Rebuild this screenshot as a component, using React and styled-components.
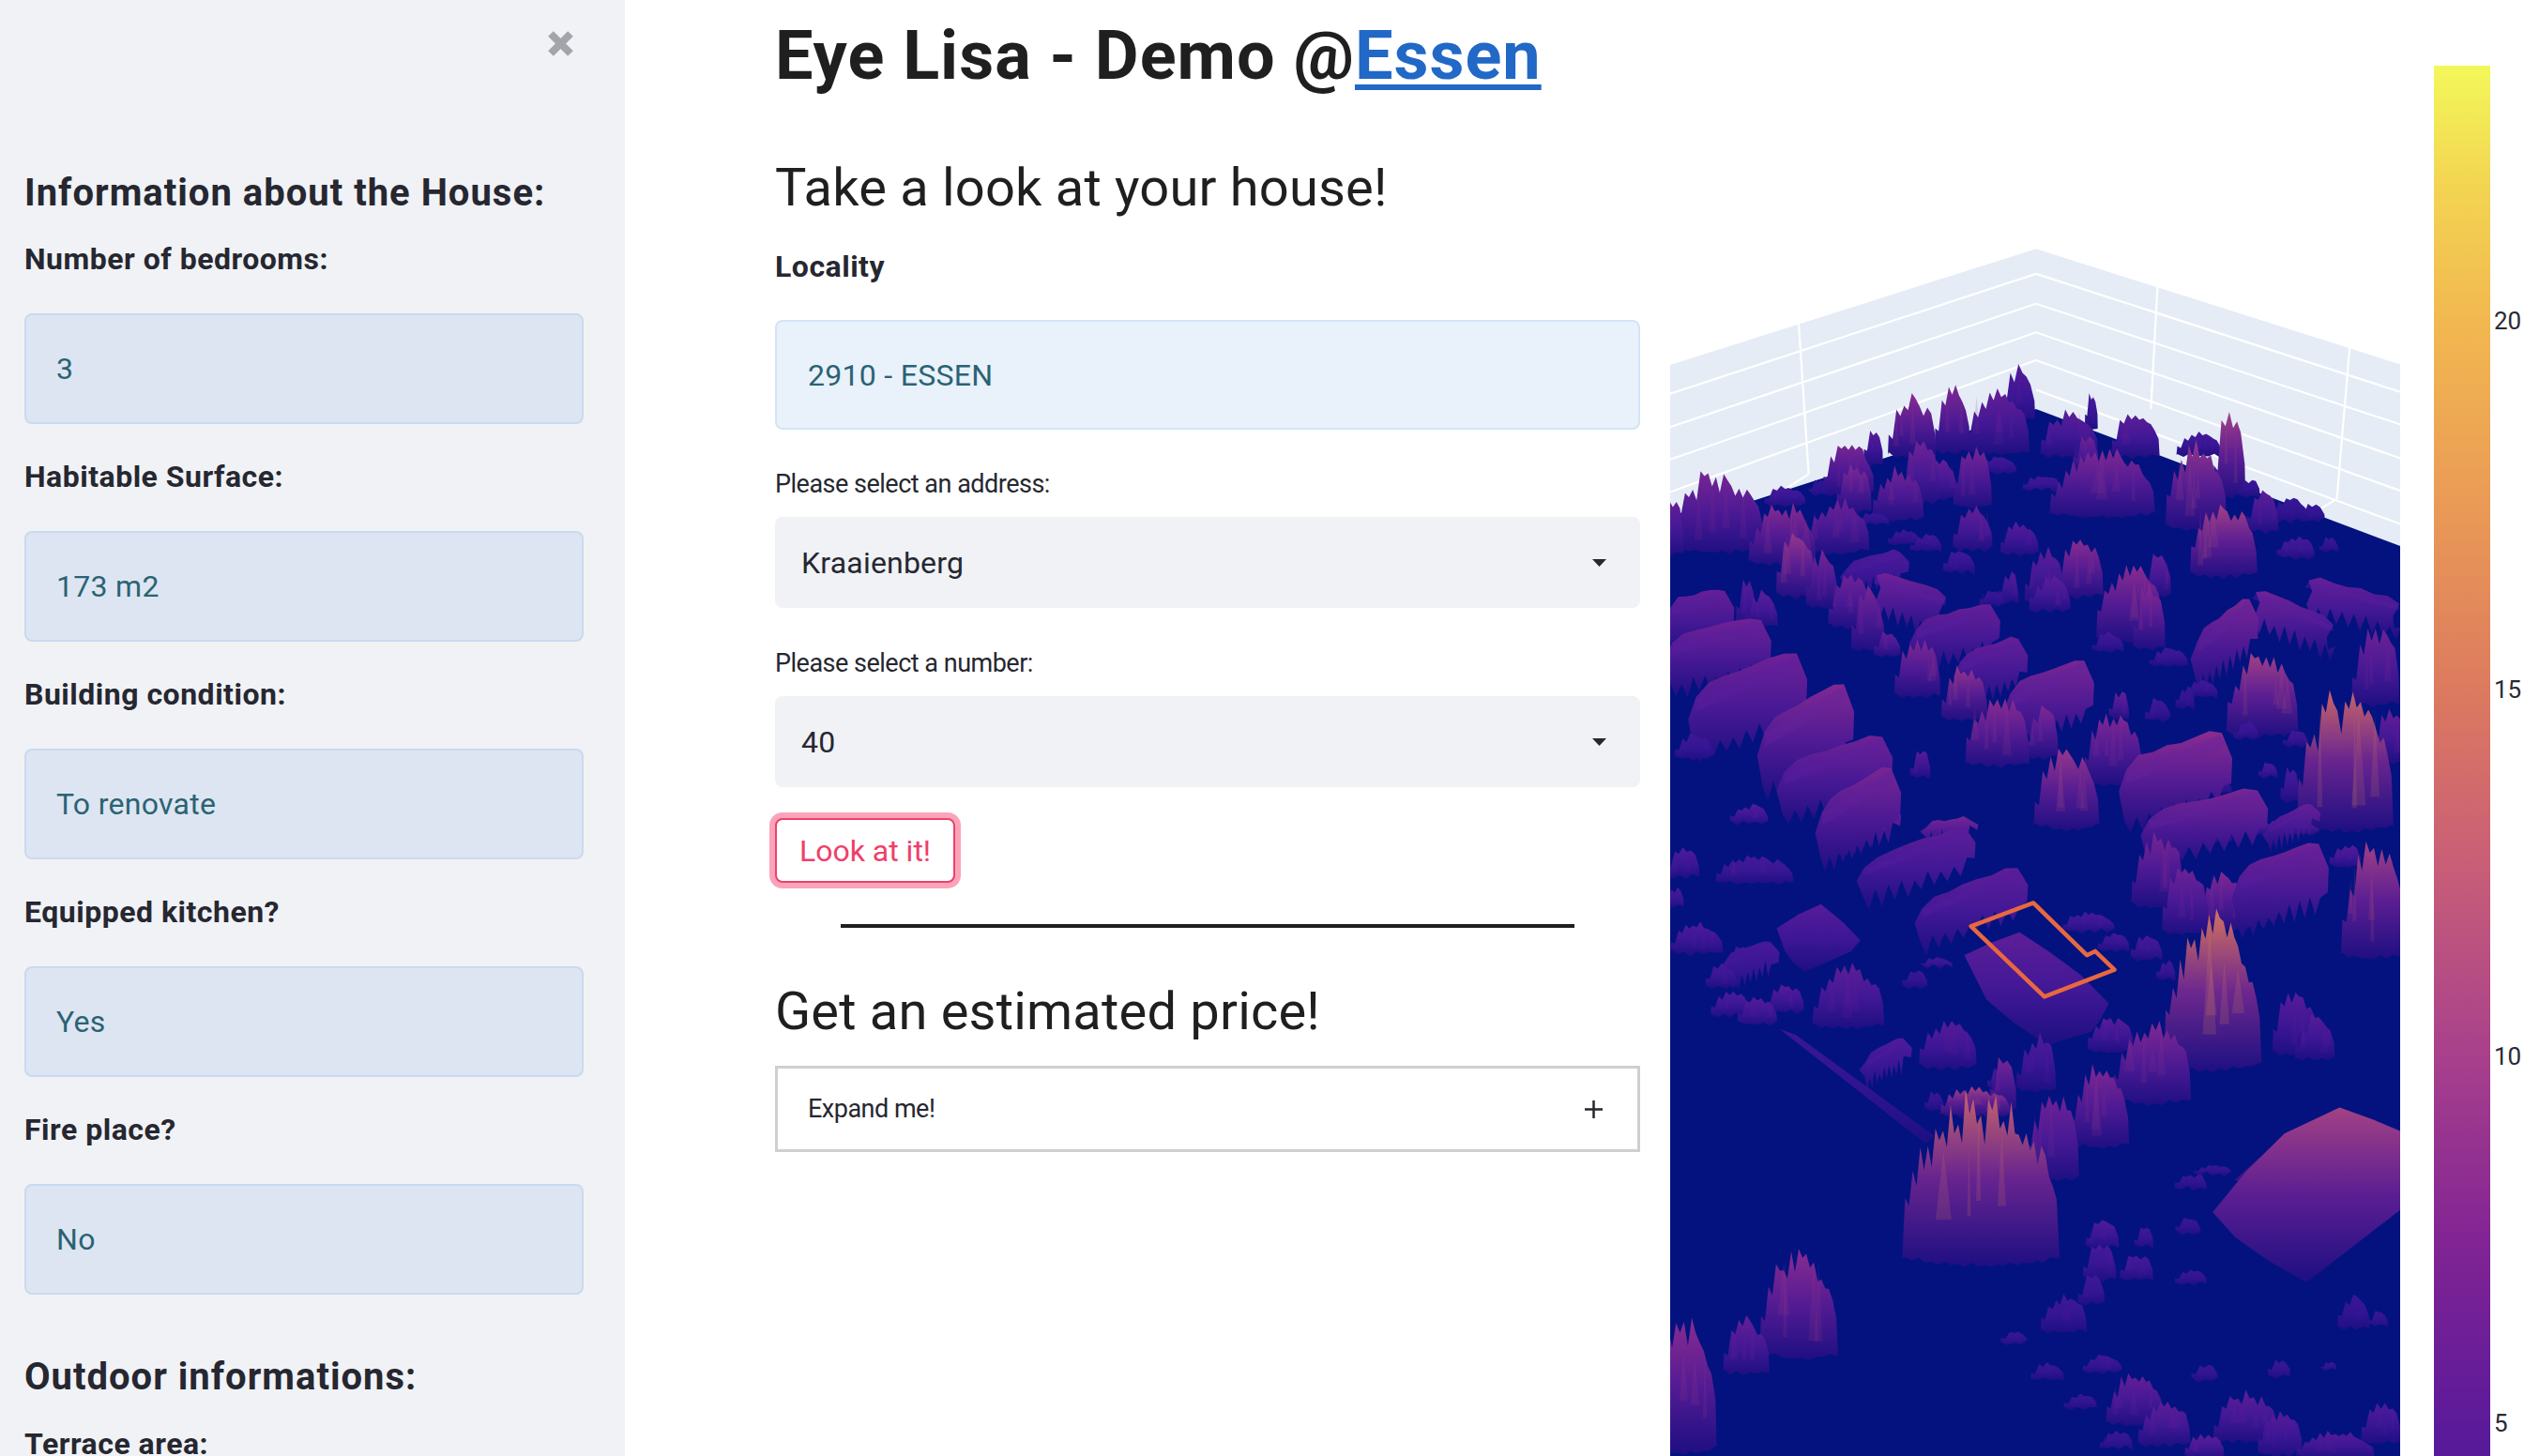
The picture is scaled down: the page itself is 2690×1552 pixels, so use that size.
import React from 'react';
import styled, { createGlobalStyle } from 'styled-components';

const Global = createGlobalStyle`
  html, body { margin: 0; padding: 0; height: 1552px; overflow: hidden; background: #fff; }
  #root { height: 1552px; }
  * { box-sizing: border-box; }
`;
const FONT = `Roboto, "Noto Sans", "Liberation Sans", sans-serif`;

const Page = styled.div`display:flex;height:1552px;overflow:hidden;font-family:${FONT};color:#262730;`;
const Sidebar = styled.aside`flex:0 0 666px;height:1552px;overflow:hidden;background:#f0f2f6;padding:33px 44px 0 26px;`;
const CloseRow = styled.div`display:flex;justify-content:flex-end;height:27px;padding-right:11px;margin-bottom:122px;`;
const SideHeading = styled.h3`margin:${p => p.$top || 0}px 0 0;font-size:40px;line-height:48px;font-weight:700;letter-spacing:1px;color:#262730;white-space:nowrap;`;
const FieldLabel = styled.div`margin-top:${p => p.$top}px;font-size:32px;line-height:40px;font-weight:700;letter-spacing:.5px;color:#262730;white-space:nowrap;`;
const ValueBox = styled.div`
  display:flex;align-items:center;height:${p => p.$h || 118}px;margin-top:${p => p.$top || 38}px;
  padding-left:${p => p.$pad || 32}px;border:2px solid ${p => p.$light ? '#d5e4f6' : '#c9daef'};border-radius:8px;
  background:${p => p.$light ? '#e9f1fb' : '#dee5f2'};color:#2a6373;font-size:32px;letter-spacing:.3px;
`;
const Main = styled.main`flex:0 0 922px;margin-left:160px;`;
const Title = styled.h1`margin:15px 0 0;font-size:72px;line-height:90px;font-weight:700;letter-spacing:1px;color:#1f1f1f;white-space:nowrap;`;
const TitleLink = styled.a`color:#2168c7;text-decoration:underline;text-decoration-thickness:6px;text-underline-offset:6px;`;
const SubTitle = styled.h2`margin:${p => p.$top}px 0 0;font-size:56px;line-height:70px;font-weight:400;letter-spacing:.2px;color:#1f1f1f;white-space:nowrap;`;
const SelectLabel = styled.div`margin-top:${p => p.$top}px;font-size:27px;line-height:36px;letter-spacing:-.5px;color:#262730;white-space:nowrap;`;
const Select = styled.div`
  display:flex;align-items:center;justify-content:space-between;height:97px;margin-top:17px;padding:0 36px 0 28px;
  background:#f0f2f6;border-radius:8px;font-size:32px;letter-spacing:.2px;color:#262730;
`;
const LookButton = styled.button`
  display:block;width:192px;height:69px;margin-top:33px;padding:0;background:#fff;border:2px solid #ea4269;border-radius:8px;
  box-shadow:0 0 0 6px rgba(246,51,102,.45);color:#ee4069;font-family:${FONT};font-size:32px;
`;
const Rule = styled.hr`height:4px;margin:44px 70px 0;border:0;background:#1f1f1f;`;
const Expander = styled.div`
  display:flex;align-items:center;justify-content:space-between;height:92px;margin-top:23px;padding:0 37px 0 32px;
  border:3px solid #cfcfd1;font-size:27px;letter-spacing:-.5px;color:#262730;
`;
const Chart = styled.svg`flex:0 0 910px;margin-left:32px;display:block;height:1552px;`;
const Tick = styled.text`font-family:${FONT};font-size:26px;fill:#2a2a33;`;

function rng(seed) {
  return () => {
    seed |= 0; seed = seed + 0x6D2B79F5 | 0;
    let t = Math.imul(seed ^ seed >>> 15, 1 | seed);
    t = t + Math.imul(t ^ t >>> 7, 61 | t) ^ t;
    return ((t ^ t >>> 14) >>> 0) / 4294967296;
  };
}
const A = (X, Y) => [1770 + X / 1.7, 240 + Y / 2.45];
const B = (X, Y) => [1770 + X / 1.7, 880 + Y / 2.33];

const toneStops = [[0, '#2a1490'], [.2, '#47199a'], [.4, '#661f96'], [.6, '#8a2c90'], [.75, '#b04c80'], [.9, '#d4735f'], [1, '#e88f58']];
const hex = c => [1, 3, 5].map(i => parseInt(c.slice(i, i + 2), 16));
const mix = (a, b, t) => { const x = hex(a), y = hex(b); return '#' + x.map((v, i) => Math.round(v + (y[i] - v) * t).toString(16).padStart(2, '0')).join(''); };
const toneColor = t => {
  for (let i = 1; i < toneStops.length; i++) if (t <= toneStops[i][0]) {
    const [a, ca] = toneStops[i - 1], [b, cb] = toneStops[i];
    return mix(ca, cb, (t - a) / (b - a));
  }
  return '#e88f58';
};
const snap = t => Math.round(t * 20) / 20;
const tones = Array.from({ length: 21 }, (_, i) => i / 20);

// [Xc, Ybase, W, Ytop, tone]
const towersA = [
  [455,600,75,435,.62],[528,590,55,398,.55],[610,590,100,420,.38],[648,505,52,352,.3],[740,600,90,475,.36],[860,600,75,478,.36],[780,530,20,425,.22],
  [340,700,80,555,.5],[350,745,55,605,.56],[385,620,30,522,.3],[430,765,80,625,.5],[470,720,60,550,.45],[565,730,60,560,.5],[505,710,55,600,.42],
  [800,755,165,575,.56],[770,640,40,535,.45],[1030,700,50,475,.72],[970,785,95,555,.66],[1020,910,105,710,.7],[1090,795,50,680,.36],[1065,705,35,660,.08],[975,600,70,535,.22],
  [100,845,150,630,.48],[22,855,34,700,.4],[220,880,105,715,.58],[245,965,62,785,.66],[292,995,50,845,.5],[225,730,65,678,.22],[320,850,100,705,.45],[285,700,30,660,.05],
  [565,845,62,725,.42],[650,855,60,770,.32],[760,965,72,795,.62],[695,985,62,830,.36],[630,985,32,895,.32],[705,1005,65,910,.36],[850,1080,105,870,.62],[885,1100,50,920,.6],[900,965,42,830,.42],
  [345,1045,72,905,.46],[375,1105,52,925,.52],[410,1125,42,1050,.42],[465,1225,72,1060,.56],[550,1285,72,1140,.66],[610,1405,100,1210,.6],[690,1385,52,1250,.55],
  [735,1568,102,1360,.66],[820,1455,92,1260,.56],[830,1285,32,1210,.42],[1090,1325,112,1100,.72],[1295,1245,75,1040,.46],[1240,1568,150,1190,.86],[1320,1400,50,1260,.4],
  [155,1045,32,905,.3],[182,1045,52,945,.35],[60,1390,60,1325,.15],[160,1560,60,1510,.3],[470,1440,32,1365,.3],
  [440,830,50,790,.12],[480,850,50,800,.14],[540,905,50,840,.16],[600,990,40,950,.12],[1150,865,60,805,.18],[1210,850,30,810,.1],[1140,770,60,710,.1],[1180,770,40,725,.08],
  [610,645,60,600,.14],[690,690,60,650,.16],[385,780,50,745,.1],[810,1110,50,1060,.14],[920,1150,60,1100,.15],[980,1230,50,1180,.14],[900,1290,40,1230,.14],[950,1260,30,1200,.1],[1060,1340,40,1290,.14],[1150,1360,40,1310,.14],
  [1000,1480,60,1440,.14],[1100,1440,30,1400,.2],[1140,1500,30,1410,.2],
];
const towersB = [
  [340,495,112,335,.36],[1000,592,152,200,.88],[890,682,122,470,.56],[795,792,92,585,.56],[710,872,82,640,.46],[580,1075,245,640,.86],[620,705,42,560,.52],[570,720,110,640,.72],
  [250,1312,122,1035,.62],[155,1355,72,1215,.42],[42,1545,102,1205,.6],[1150,562,72,400,.3],[1185,578,62,465,.3],[900,195,82,0,.52],[950,262,72,85,.46],[1022,255,82,100,.56],[1292,318,102,30,.68],
  [520,598,90,470,.3],[680,655,62,510,.26],[610,650,32,590,.22],[495,705,30,650,.12],[860,1485,92,1350,.42],[912,1535,82,1420,.36],[1060,1525,102,1400,.36],[1122,1560,70,1450,.32],[1222,1568,122,1500,.3],[1305,1530,62,1420,.25],[985,1568,62,1500,.36],
  [800,1045,52,975,.24],[795,1125,52,1030,.22],[862,1125,52,1060,.18],[780,1185,42,1110,.14],[730,1255,72,1160,.15],[985,1375,42,1330,.12],[800,1355,62,1310,.16],[640,1285,42,1250,.1],[700,1375,52,1330,.1],[760,1445,52,1410,.1],[825,1545,52,1500,.1],
  [170,140,122,70,.2],[40,125,52,50,.25],[65,315,82,235,.26],[25,200,30,150,.2],[125,470,60,400,.26],[175,490,62,420,.3],[225,460,60,390,.28],[110,400,50,340,.22],[150,350,50,290,.15],
  [815,560,72,465,.32],[775,260,82,210,.22],[820,310,50,260,.15],[880,330,50,265,.22],[915,380,30,330,.14],[500,350,50,325,.14],[460,400,40,355,.1],[1000,865,60,840,.1],[960,900,50,860,.08],[955,1010,40,970,.08],[875,1045,30,990,.16],[960,1135,50,1100,.1],[1255,1245,50,1160,.12],[1300,1240,30,1200,.1],[1210,1350,25,1330,.1],[1120,1365,35,1320,.12],
  [1130,20,110,-20,.4],[1240,100,50,40,.3],[1000,40,60,-30,.3],
];
// x0,y0,x1,y1,drop,tone
const housesA = [
  [17,985,118,950,110,.38],[17,1078,185,1025,135,.44],[60,1215,250,1110,170,.44],[185,1305,335,1190,180,.55],[220,1415,405,1330,135,.46],[290,1515,420,1410,160,.5],
  [388,905,520,968,95,.44],[460,1045,600,985,110,.4],[540,1130,650,1075,110,.42],[630,1210,770,1130,145,.52],[840,1405,1020,1318,165,.62],[970,1075,1068,970,130,.5],
  [1075,950,1222,1040,80,.46],[1170,920,1342,985,80,.42],[335,890,435,850,65,.24],[690,1200,760,1160,85,.3],
  [880,1540,1085,1470,120,.5],[1100,1568,1180,1510,55,.4],[300,1568,420,1510,70,.45],[480,1568,560,1550,35,.5],
];
const housesB = [
  [365,95,555,0,95,.36],[470,195,650,100,105,.36],[1045,112,1195,38,150,.46],[370,580,440,525,60,.24],[115,330,200,285,65,.18],
];
const polysB = [
  [[[210,255],[250,220],[290,195],[330,240],[362,285],[345,312],[300,340],[260,362],[240,340],[225,312]],.28],
  [[[550,322],[600,290],[650,265],[700,310],[760,370],[812,442],[795,485],[780,512],[700,545],[640,490],[590,432]],.34],
  [[[1000,960],[1060,860],[1130,765],[1230,700],[1290,730],[1342,760],[1342,952],[1250,1050],[1170,1135],[1100,1080],[1040,1022]],.68],
  [[[1040,880],[1130,770],[1230,705],[1335,790],[1250,830],[1150,925]],.6],
  [[[610,300],[650,268],[745,365],[770,385],[700,405],[650,350]],.42],
  [[[215,505],[245,520],[495,770],[480,790]],.12],
];
const outline = [[675,192],[562,250],[695,425],[822,358],[787,312],[772,322]].map(([x, y]) => B(x, y).join(',')).join(' ');

function buildTerrain() {
  const r = rng(77);
  const out = [];
  const tower = (conv, [xc, yb, w0, yt, tone]) => {
    const w = w0 * 1.12;
    const [, base] = conv(xc, yb);
    const [xl] = conv(xc - w / 2, yb);
    const [xr] = conv(xc + w / 2, yb);
    const [, top] = conv(xc, yt);
    const H = base - top, W = xr - xl;
    const n = Math.max(3, Math.round(W / 8));
    const pts = [[xl - W * .02, base]];
    for (let i = 0; i <= n; i++) {
      const t = i / n;
      const env = .08 + .92 * Math.pow(Math.sin(Math.PI * (t * .94 + .03)), .5);
      const peak = env * (.8 + .2 * r());
      pts.push([xl + W * t, base - H * peak]);
      if (i < n) pts.push([xl + W * (t + .5 / n), base - H * peak * (.78 + .16 * r())]);
    }
    pts.push([xr + W * .02, base]);
    const m = Math.max(3, Math.round(W / 7));
    for (let i = m; i >= 0; i--) {
      const x = xl + W * i / m;
      pts.push([x, base + (i % 2 ? 3 : -3) * r() + Math.sin(i / m * Math.PI) * H * .04]);
    }
    const streaks = [];
    const sn = Math.min(4, Math.round(W / 16));
    for (let i = 0; i < sn; i++) {
      const sx = xl + W * (.12 + .76 * r());
      const sw = 2 + W * .06 * r();
      const st = base - H * (.6 + .3 * r());
      const sb = base - H * (.1 + .25 * r());
      streaks.push(`${sx - sw},${sb} ${sx},${st} ${sx + sw},${sb}`);
    }
    out.push({ y: base, pts: pts.map(p => p.map(v => v.toFixed(1)).join(',')).join(' '), tone: snap(tone), streaks });
  };
  const house = (conv, [x0, y0, x1, y1, drop, tone]) => {
    const [ax, ay] = conv(x0, y0), [bx, by] = conv(x1, y1);
    const d = conv(0, drop)[1] - conv(0, 0)[1];
    const sign = by < ay ? 1 : -1;
    const dx = bx - ax, dy = by - ay;
    const pts = [[ax - 6 * sign, ay + d * .45], [ax + dx * .02, ay + d * .1]];
    const n = 7;
    for (let i = 1; i < n; i++) {
      const t = i / n;
      pts.push([ax + dx * t, ay + dy * t - 1 - 3 * r()]);
    }
    pts.push([bx - dx * .02, by + d * .05], [bx + 9 * sign, by + d * .45], [bx + 8 * sign, by + d * .85]);
    const bn = 16;
    for (let i = bn; i >= 0; i--) {
      const t = i / bn;
      pts.push([ax + dx * t, ay + dy * t + d + (i % 2 ? 8 + 5 * r() : -2 - 7 * r())]);
    }
    out.push({ y: Math.max(ay, by) + d, pts: pts.map(p => p.map(v => v.toFixed(1)).join(',')).join(' '), tone: snap(tone), streaks: [],
      roof: `${ax + dx * .03},${ay + d * .12} ${bx - dx * .03},${by + d * .08} ${bx + 2 * sign},${by + d * .26} ${ax + 2 * sign},${ay + d * .32}` });
  };
  const poly = (conv, [p, tone]) => {
    const pts = p.map(([x, y]) => conv(x, y));
    const maxY = Math.max(...pts.map(q => q[1]));
    out.push({ y: maxY, pts: pts.map(q => q.map(v => v.toFixed(1)).join(',')).join(' '), tone: snap(tone), streaks: [] });
  };
  towersA.forEach(t => tower(A, t));
  towersB.forEach(t => tower(B, t));
  housesA.forEach(t => house(A, t));
  housesB.forEach(t => house(B, t));
  polysB.forEach(t => poly(B, t));
  return out.sort((a, b) => a.y - b.y);
}
const terrain = buildTerrain();

const aLine = (a, b) => { const p = A(...a), q = A(...b); return { x1: p[0], y1: p[1], x2: q[0], y2: q[1] }; };
const gridLines = [
  [[680,127],[17,440]],[[680,205],[17,527]],[[680,280],[17,612]],[[680,353],[17,697]],
  [[680,127],[1343,437]],[[680,205],[1343,522]],[[680,280],[1343,610]],[[680,353],[1343,695]],[[680,430],[1343,782]],
  [[250,258],[268,650]],[[900,160],[888,480]],[[1248,320],[1225,715]],[[1225,715],[1190,745]],[[268,650],[225,690]],
];
const ptsA = list => list.map(([x, y]) => A(x, y).join(',')).join(' ');

const BAR_TOP = 70, BAR_H = 1482;
const barStops = [[70,'#f3f85a'],[200,'#f3d452'],[343,'#f2b850'],[540,'#ea9a56'],[736,'#dc7a5f'],[930,'#c75d78'],[1127,'#a8408c'],[1320,'#822494'],[1518,'#5c1a9a'],[1552,'#561a99']];

function TerrainChart() {
  return (
    <Chart viewBox="1780 0 910 1552" width="910" height="1552">
      <defs>
        {tones.map(t => (
          <linearGradient key={t} id={`tw${Math.round(t * 20)}`} x1="0" y1="0" x2="0" y2="1">
            <stop offset="0" stopColor={toneColor(t)} />
            <stop offset=".5" stopColor={mix(toneColor(t * .72), '#2c1290', .38)} />
            <stop offset="1" stopColor="#1d0f82" />
          </linearGradient>
        ))}
        <linearGradient id="bar" x1="0" y1="0" x2="0" y2="1">
          {barStops.map(([y, c]) => <stop key={y} offset={(y - BAR_TOP) / BAR_H} stopColor={c} />)}
        </linearGradient>
        <clipPath id="plot"><rect x="1780" y="0" width="778" height="1552" /></clipPath>
      </defs>
      <g clipPath="url(#plot)">
        <polygon points={ptsA([[680,62],[1343,365],[1343,860],[680,480],[17,800],[17,365]])} fill="#e5ecf6" />
        {gridLines.map(([a, b], i) => <line key={i} {...aLine(a, b)} stroke="#fff" strokeWidth="2.2" />)}
        <polygon points={`${A(680,480).join(',')} ${A(1343,840).join(',')} 2558,1552 1780,1552 ${A(17,790).join(',')}`} fill="#03127f" />
        {terrain.map((it, i) => (
          <g key={i}>
            <polygon points={it.pts} fill={`url(#tw${Math.round(it.tone * 20)})`} />
            {it.roof && <polygon points={it.roof} fill={mix(toneColor(it.tone), '#4a1aa8', .5)} opacity=".4" />}
            {it.streaks.map((s, j) => <polygon key={j} points={s} fill={toneColor(Math.min(1, it.tone + .1))} opacity=".16" />)}
          </g>
        ))}
        <polygon points={outline} fill="none" stroke="#e8683f" strokeWidth="4.5" strokeLinejoin="round" />
      </g>
      <rect x="2594" y={BAR_TOP} width="60" height={BAR_H} fill="url(#bar)" />
      {[[20, 344], [15, 737], [10, 1128], [5, 1519]].map(([v, y]) => (
        <Tick key={v} x="2658" y={y} dominantBaseline="middle">{v}</Tick>
      ))}
    </Chart>
  );
}

const fields = [['Number of bedrooms:', '3'], ['Habitable Surface:', '173 m2'], ['Building condition:', 'To renovate'], ['Equipped kitchen?', 'Yes'], ['Fire place?', 'No']];

const Caret = () => <svg width="15" height="8" viewBox="0 0 15 8"><polygon points="0,0 15,0 7.5,8" fill="#262730" /></svg>;

export default function App() {
  return (
    <Page>
      <Global />
      <Sidebar>
        <CloseRow>
          <svg width="27" height="27" viewBox="0 0 27 27"><path d="M3 3 L24 24 M24 3 L3 24" stroke="#a3a5aa" strokeWidth="8" /></svg>
        </CloseRow>
        <SideHeading>Information about the House:</SideHeading>
        {fields.map(([l, v], i) => (
          <React.Fragment key={l}>
            <FieldLabel $top={i === 0 ? 26 : 36}>{l}</FieldLabel>
            <ValueBox>{v}</ValueBox>
          </React.Fragment>
        ))}
        <SideHeading $top={64}>Outdoor informations:</SideHeading>
        <FieldLabel $top={27}>Terrace area:</FieldLabel>
      </Sidebar>
      <Main>
        <Title>Eye Lisa - Demo @<TitleLink href="#">Essen</TitleLink></Title>
        <SubTitle $top={60}>Take a look at your house!</SubTitle>
        <FieldLabel $top={29}>Locality</FieldLabel>
        <ValueBox $light $top={37} $pad={33} $h={117}>2910 - ESSEN</ValueBox>
        <SelectLabel $top={40}>Please select an address:</SelectLabel>
        <Select>Kraaienberg<Caret /></Select>
        <SelectLabel $top={41}>Please select a number:</SelectLabel>
        <Select>40<Caret /></Select>
        <LookButton>Look at it!</LookButton>
        <Rule />
        <SubTitle $top={54}>Get an estimated price!</SubTitle>
        <Expander>Expand me!
          <svg width="19" height="19" viewBox="0 0 19 19"><path d="M9.5 0V19M0 9.5H19" stroke="#262730" strokeWidth="2.5" /></svg>
        </Expander>
      </Main>
      <TerrainChart />
    </Page>
  );
}
